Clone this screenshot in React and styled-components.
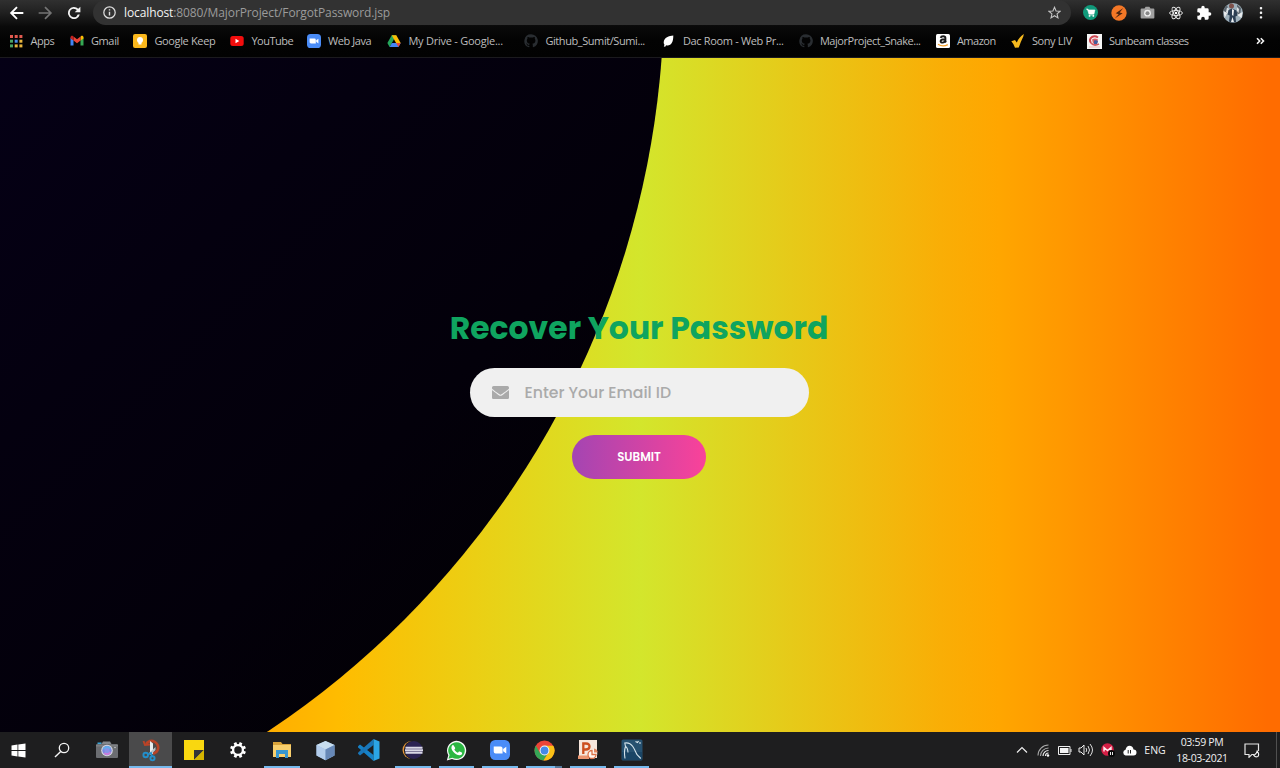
import React from "react";
import styled, { createGlobalStyle } from "styled-components";

const Global = createGlobalStyle`
  * { box-sizing: border-box; }
  html, body { margin: 0; padding: 0; }
  body { width: 1280px; height: 768px; overflow: hidden; background: #000; font-family: "Open Sans", "Noto Sans", sans-serif; }
  svg { display: block; flex: none; }
`;

const Screen = styled.div`
  width: 1280px;
  height: 768px;
  display: flex;
  flex-direction: column;
  overflow: hidden;
`;

/* ---------- browser chrome ---------- */
const Chrome = styled.header`
  height: 58px;
  flex: none;
  border-bottom: 1px solid #1b1a1e;
  background: linear-gradient(#303030 0, #212121 12px, #090909 27px, #030303 40px, #020202 100%);
`;
const Toolbar = styled.div`
  height: 25px;
  display: flex;
  align-items: center;
`;
const NavButtons = styled.div`
  width: 93px;
  padding-left: 9px;
  display: flex;
  align-items: center;
  gap: 12px;
`;
const AddressBar = styled.div`
  width: 978px;
  height: 25px;
  padding: 0 10px 0 10px;
  border-radius: 12.5px;
  background: #323232;
  display: flex;
  align-items: center;
`;
const Url = styled.div`
  flex: 1;
  margin-left: 8px;
  font-size: 12px;
  line-height: 16px;
  letter-spacing: -0.11px;
  color: #9b9b9b;
  white-space: nowrap;
`;
const Host = styled.span`
  color: #f4f4f4;
`;
const Extensions = styled.div`
  flex: 1;
  padding-left: 10px;
  display: flex;
  align-items: center;
`;
const ExtensionSlot = styled.div`
  width: ${(p) => p.$width}px;
  display: flex;
  align-items: center;
  justify-content: center;
`;
const Bookmarks = styled.nav`
  height: 32px;
  padding-left: 9px;
  display: flex;
  align-items: center;
`;
const Bookmark = styled.div`
  width: ${(p) => p.$width}px;
  display: flex;
  align-items: center;
  gap: 7.4px;
`;
const BookmarkLabel = styled.span`
  font-size: 11px;
  line-height: 16px;
  letter-spacing: ${(p) => p.$spacing}px;
  color: #bdbdbd;
  white-space: nowrap;
`;
const More = styled.div`
  margin-left: auto;
  padding-right: 15px;
`;

/* ---------- page ---------- */
const Page = styled.main`
  position: relative;
  height: 674px;
  flex: none;
  overflow: hidden;
  background: linear-gradient(90deg, #ff6a00 0%, #ffac00 20%, #ffbc00 26.5%, #d3e62c 50%, #f9ae06 73.5%, #ffa600 78%, #ff6c00 99%);
`;
const Circle = styled.div`
  position: absolute;
  left: -1108px;
  top: -951.4px;
  width: 1772.4px;
  height: 1772.4px;
  border-radius: 50%;
  background: linear-gradient(-45deg, #020104 10%, #03000a 20%, #04000f 31%, #050016 42%);
`;
const Form = styled.form`
  position: relative;
  width: 400px;
  margin-left: 439px;
  padding-top: 245px;
  display: flex;
  flex-direction: column;
  align-items: center;
  font-family: Poppins, Inter, sans-serif;
`;
const Title = styled.h1`
  margin: 0;
  font-size: 31.45px;
  line-height: 50px;
  font-weight: 700;
  color: #0fa45f;
  white-space: nowrap;
`;
const Field = styled.div`
  width: 339px;
  height: 49px;
  margin-top: 15px;
  padding-left: 22px;
  border-radius: 25px;
  background: #f0f0f0;
  display: flex;
  align-items: center;
  gap: 16px;
`;
const Placeholder = styled.span`
  font-size: 15.7px;
  font-weight: 500;
  line-height: 24px;
  color: #aaa;
  white-space: nowrap;
`;
const Submit = styled.div`
  width: 134px;
  height: 44px;
  margin-top: 18px;
  border-radius: 22px;
  background: linear-gradient(90deg, #a445b2, #fa4299);
  display: flex;
  align-items: center;
  justify-content: center;
  font-size: 11.8px;
  font-weight: 600;
  color: #fff;
`;

/* ---------- taskbar ---------- */
const Taskbar = styled.footer`
  height: 36px;
  flex: none;
  display: flex;
  background: #1e1e1f;
`;
const Task = styled.div`
  width: ${(p) => p.$width || 43.73}px;
  height: 36px;
  padding-right: ${(p) => p.$shift || 0}px;
  position: relative;
  display: flex;
  align-items: center;
  justify-content: center;
  background: ${(p) => (p.$active ? "#4a4a4b" : "transparent")};
`;
const Running = styled.i`
  position: absolute;
  bottom: 0;
  left: ${(p) => (p.$wide ? 0 : 4)}px;
  right: ${(p) => (p.$wide ? 0 : 4)}px;
  height: 2px;
  border-right: ${(p) => (p.$grouped ? "7px solid #55789a" : "none")};
  background: #76b9ed;
`;
const Tray = styled.div`
  margin-left: auto;
  display: flex;
  align-items: center;
`;
const TrayItem = styled.div`
  width: ${(p) => p.$width || 21.5}px;
  display: flex;
  align-items: center;
  justify-content: center;
`;
const TrayText = styled.div`
  width: ${(p) => p.$width}px;
  text-align: center;
  font-size: 10.5px;
  line-height: 16px;
  letter-spacing: ${(p) => p.$spacing || 0}px;
  color: #f2f2f2;
  white-space: nowrap;
`;
const DesktopEdge = styled.div`
  height: 36px;
  width: 4px;
  margin-left: 7px;
  border-left: 1px solid #505050;
`;

/* ---------- icons ---------- */
const Icon = ({ s = 14, w, h, vb = "0 0 24 24", children, ...r }) => (
  <svg width={w || s} height={h || s} viewBox={vb} fill="none" {...r}>{children}</svg>
);
const BackIcon = () => (
  <Icon s={16}><path d="M21.5 12H3.5M12 3.2 3.2 12l8.8 8.8" stroke="#fff" strokeWidth="2.8" /></Icon>
);
const ForwardIcon = () => (
  <Icon s={16}><path d="M2.5 12h18M12 3.2l8.8 8.8-8.8 8.8" stroke="#747474" strokeWidth="2.6" /></Icon>
);
const ReloadIcon = () => (
  <Icon s={18}>
    <path d="M17.65 6.35A8 8 0 1 0 19.73 14h-2.7A5.5 5.5 0 1 1 12 6.5c1.5 0 2.900.6 3.900 1.600L13 11h7.500V3.500z" fill="#f2f2f2" />
  </Icon>
);
const InfoIcon = () => (
  <Icon s={13}><circle cx="12" cy="12" r="10.5" stroke="#dedede" strokeWidth="2.3" /><path d="M12 10.5v7M12 6v2.5" stroke="#dedede" strokeWidth="2.6" /></Icon>
);
const StarIcon = () => (
  <Icon s={13}><path d="m12 2.3 2.9 6.8 7.4.6-5.6 4.9 1.7 7.3L12 18l-6.4 3.9 1.7-7.3-5.6-4.9 7.4-.6z" stroke="#c4c4c4" strokeWidth="2" /></Icon>
);
const CartIcon = () => (
  <Icon s={15}><circle cx="12" cy="12" r="12" fill="#10997a" /><path d="M5 6.500h3l.5 1.500H19l-1.500 6.500H9.500L7.500 8" fill="#fff" stroke="#fff" strokeWidth="1" /><path d="M9 16h9" stroke="#fff" strokeWidth="1" /><circle cx="10.5" cy="17.5" r="1.400" fill="#fff" /><circle cx="16.5" cy="17.5" r="1.400" fill="#fff" /></Icon>
);
const BoltIcon = () => (
  <Icon s={16}><circle cx="12" cy="12" r="11.5" fill="#f37726" /><path d="M18.500 4.500 7 12.500l4.500 1.200-6 6.500L17.500 12.500l-4.500-1.200z" fill="#4c2512" /></Icon>
);
const CameraIcon = () => (
  <Icon s={15}><path d="M2.500 5.500h4.700L9 2.800h6l1.800 2.700h4.700a1.500 1.500 0 0 1 1.500 1.500v13a1.500 1.500 0 0 1-1.500 1.500h-19A1.500 1.500 0 0 1 1 20V7a1.500 1.500 0 0 1 1.500-1.500z" fill="#a0a0a0" /><circle cx="12" cy="13" r="5.500" fill="#ececec" /><circle cx="12" cy="13" r="3.200" fill="#878787" /></Icon>
);
const AtomIcon = () => (
  <Icon s={14}><g stroke="#e9e9e9" strokeWidth="1.6"><ellipse cx="12" cy="12" rx="11" ry="4.3" /><ellipse cx="12" cy="12" rx="11" ry="4.3" transform="rotate(60 12 12)" /><ellipse cx="12" cy="12" rx="11" ry="4.3" transform="rotate(120 12 12)" /></g><circle cx="12" cy="12" r="2.2" fill="#fff" /></Icon>
);
const PuzzleIcon = () => (
  <Icon s={16}><path d="M20.5 11H19V7a2 2 0 0 0-2-2h-4V3.5a2.5 2.5 0 0 0-5 0V5H4a2 2 0 0 0-2 2v3.8h1.5a2.7 2.7 0 0 1 0 5.4H2V20a2 2 0 0 0 2 2h3.8v-1.5a2.7 2.7 0 0 1 5.4 0V22H17a2 2 0 0 0 2-2v-4h1.5a2.5 2.5 0 0 0 0-5z" fill="#fff" /></Icon>
);
const Avatar = () => (
  <Icon s={20} vb="0 0 20 20"><circle cx="10" cy="10" r="10" fill="#9eb0bb" /><path d="M4 2.200A10 10 0 0 0 1 14l3-3 1-6zM14 1.500l4 3.500-1 9-3-4z" fill="#5c666f" /><path d="m.5 8 4 2-3 5zM14 12l5.500-3-1 6z" fill="#e8ebed" /><path d="M4 4.500 6 6l-1 5-2-2zM14 4l2 2-.5 4-1.500-2z" fill="#dce1e5" /><circle cx="8.500" cy="3" r="2.500" fill="#7e514b" /><path d="M5.500 7 9 5.500l4.500 2 1 5-2 1 .5 5.500q-4 1.200-7-.5l.7-6-2.200-1z" fill="#2b3e53" /><path d="m9 6 2 1-.7 6-1.300-1zM9.500 14l1.500 5H8z" fill="#edf0f2" /></Icon>
);
const DotsIcon = () => (
  <Icon w={4} h={14} vb="0 0 4 14"><g fill="#f4f4f4"><rect x=".8" y="1" width="2.4" height="2.4" rx=".8" /><rect x=".8" y="5.6" width="2.4" height="2.4" rx=".8" /><rect x=".8" y="10.2" width="2.4" height="2.4" rx=".8" /></g></Icon>
);
const AppsIcon = () => {
  const colors = ["#e15a50", "#e15a50", "#e15a50", "#4ca466", "#4b8ee8", "#e8b63f", "#4ca466", "#e8b63f", "#e8b63f"];
  return <Icon vb="0 0 14 14">{colors.map((c, i) => <rect key={i} x={1 + (i % 3) * 4.7} y={1 + Math.floor(i / 3) * 4.7} width="3" height="3" fill={c} />)}</Icon>;
};
const GmailIcon = () => (
  <Icon vb="0 0 14 14"><path d="M.5 3.500v8h3V6z" fill="#4285f4" /><path d="M10.500 6v5.500h3v-8z" fill="#34a853" /><path d="M10.500 3v3.600l3-2.200V3.400c0-1.500-1.600-2-2.600-1.200z" fill="#fbbc04" /><path d="M3.500 6.600V2.600L7 5.200l3.500-2.600v4L7 9.200z" fill="#ea4335" /><path d="M.5 3.400v1l3 2.200V2.500l-.4-.3C2.100 1.400.5 1.900.5 3.400z" fill="#c5221f" /></Icon>
);
const KeepIcon = () => (
  <Icon vb="0 0 14 14"><rect width="14" height="14" rx="2" fill="#fbb81c" /><circle cx="7" cy="6" r="3" fill="#fff" /><path d="M5.500 8h3v2.500h-3z" fill="#fff" /></Icon>
);
const YoutubeIcon = () => (
  <Icon vb="0 0 14 14"><rect x=".3" y="2" width="13.400" height="10" rx="2.500" fill="#f20d0d" /><path d="m5.500 4.800 3.800 2.200-3.800 2.200z" fill="#fff" /></Icon>
);
const ZoomIcon = ({ s = 14 }) => (
  <Icon s={s} vb="0 0 14 14"><rect width="14" height="14" rx="3.600" fill="#4a8cf7" /><path d="M2.600 4.600h4.800A1.400 1.400 0 0 1 8.800 6v3.500H4A1.400 1.400 0 0 1 2.600 8.100zM9.200 6.300l2.200-1.600v4.700L9.200 7.800z" fill="#fff" /></Icon>
);
const DriveIcon = () => (
  <Icon vb="0 0 14 14"><path d="M4.700 1.300h4.600L7 5.300 2.600 13 .4 9z" fill="#24a65a" /><path d="M4.700 1.300h4.600L13.700 9H9.100z" fill="#fbbc05" /><path d="M4.900 9h8.800l-2.300 4H2.600z" fill="#4285f4" /><path d="M13.700 9 11.400 13 9.100 9z" fill="#e64a3b" /></Icon>
);
const GithubIcon = () => (
  <Icon><path d="M12 .5a11.500 11.500 0 0 0-3.600 22.400c.6.1.8-.2.8-.6v-2.200c-3.200.7-3.900-1.400-3.900-1.400-.5-1.300-1.300-1.700-1.300-1.700-1-.7.1-.7.1-.7 1.200.1 1.800 1.200 1.800 1.200 1 1.800 2.700 1.300 3.400 1 .1-.8.400-1.300.7-1.600-2.500-.3-5.200-1.300-5.200-5.700 0-1.300.4-2.300 1.200-3.100-.1-.3-.5-1.500.1-3.100 0 0 1-.3 3.200 1.200a11 11 0 0 1 5.800 0c2.200-1.500 3.200-1.200 3.200-1.200.6 1.600.2 2.800.1 3.100.7.8 1.200 1.800 1.200 3.100 0 4.400-2.700 5.400-5.300 5.700.4.400.8 1.100.8 2.200v3.200c0 .4.200.7.8.6A11.500 11.500 0 0 0 12 .5z" fill="#292d31" /></Icon>
);
const LeafIcon = () => (
  <Icon vb="0 0 14 14"><path d="M11.300 1.500C7 1.700 2 3.500 1.700 8.200c0 1.200.3 1.900.8 2.500L1.800 12.500l1.400.2.900-1.400c4.700 1.200 7.300-2.800 7.200-9.800z" fill="#fff" /></Icon>
);
const AmazonIcon = () => (
  <Icon vb="0 0 14 14"><rect width="14" height="14" rx="1.500" fill="#fff" /><path d="M4.700 3.900q.3-1.600 2.400-1.600 2.300 0 2.300 1.800V7q0 .7.700 1.400M8.700 5.200c-2.500 0-4.100.5-4.100 2 0 2.100 4.100 1.900 4.100-.5" stroke="#191919" strokeWidth="1.900" /><path d="M2 10.200q4.800 3.100 9.800.4" stroke="#f6a12b" strokeWidth="1.300" /></Icon>
);
const SonyIcon = () => (
  <Icon vb="0 0 14 14"><path d="M.3 7.200 4 6l1.800 2.500Q8 3 12.800 0l-.5 2.500Q9.800 7.500 7.800 13.500l-3.800.3Q2.600 9.500.3 7.200z" fill="#f6b91e" /></Icon>
);
const SunbeamIcon = () => (
  <Icon s={15} vb="0 0 15 15"><path fill="#f5f5f5" d="M0 0h15v15H0z" /><path d="M11 3.500Q8 1.500 5 3 1.500 5.500 4 9" stroke="#cf4651" strokeWidth="2" /><path d="M5 5.500q3-2 6 0l-1 4H6z" fill="#d4606c" /><path d="M7 6.500q3-1 4 1l-1 2.500H7z" fill="#425c9d" /><path d="M4 9q3 3.500 8 1" stroke="#d35a63" strokeWidth="1.800" /><path d="M2 13h11" stroke="#e4b7bb" strokeWidth="1" /></Icon>
);
const MoreIcon = () => <Icon w={9} h={8} vb="0 0 9 8"><path d="m1 1.200 2.700 2.800L1 6.800M4.800 1.200 7.500 4 4.800 6.800" stroke="#f4f4f4" strokeWidth="1.600" /></Icon>;
const MailIcon = () => (
  <Icon w={17} h={13} vb="0 0 512 384" preserveAspectRatio="none"><path d="M502.300 126.800c3.900-3.100 9.700-.2 9.700 4.700V336c0 26.500-21.500 48-48 48H48c-26.500 0-48-21.500-48-48V131.600c0-5 5.700-7.800 9.700-4.700 22.400 17.400 52.100 39.500 154.100 113.600 21.100 15.400 56.700 47.800 92.200 47.600 35.700.3 72-32.800 92.300-47.600 102-74.100 131.600-96.300 154-113.700zM256 256c23.200.4 56.600-29.200 73.400-41.400 132.700-96.300 142.800-104.700 173.400-128.700 5.800-4.500 9.200-11.500 9.200-18.900V48c0-26.500-21.500-48-48-48H48C21.500 0 0 21.500 0 48v19c0 7.400 3.400 14.300 9.200 18.900 30.600 23.900 40.700 32.400 173.400 128.700 16.800 12.200 50.200 41.800 73.400 41.400z" fill="#aaa" /></Icon>
);

const WindowsIcon = () => <Icon s={15} vb="0 0 15 15"><path d="M.5 2.500 6.500 1.600v5.500h-6zM7.300 1.500l7.200-1v6.600H7.300zM.5 7.900h6v5.500l-6-.9zM7.300 7.900h7.200v6.600l-7.200-1z" fill="#fff" /></Icon>;
const SearchIcon = () => <Icon s={16} vb="0 0 16 16"><circle cx="10" cy="6" r="4.700" stroke="#f5f5f5" strokeWidth="1.300" /><path d="M6.700 9.500 1 15" stroke="#f5f5f5" strokeWidth="1.400" /></Icon>;
const PhotoIcon = () => <Icon w={22} h={18} vb="0 0 22 18"><path d="M1.500 1.500h4V4h-4z" fill="#39a5d9" /><path d="M7 .5h7L15.500 3H5.500z" fill="#85898e" /><rect y="3" width="22" height="14" rx="1" fill="#6b6d71" /><path d="M0 4h22v1.500H0z" fill="#7e8083" /><circle cx="11" cy="9.500" r="5.800" fill="#d9dce2" /><circle cx="11" cy="9.500" r="4.700" fill="#7a87e2" /><path d="M6.600 8a4.600 4.600 0 0 1 8.400-.7L11 9.500z" fill="#62aeea" /><path d="M7.500 12.600a4.600 4.600 0 0 0 7.700-1.200L11 9.500z" fill="#c67ddb" /><circle cx="11" cy="9.500" r="2.600" fill="#8a93e9" /><circle cx="19" cy="6.500" r=".7" fill="#ddd" /></Icon>;
const SnipIcon = () => <Icon w={20} h={23} vb="0 0 20 23"><path d="M5 5Q9 0 14 3c5 3.500 4 10-2 11.700" stroke="#b94327" strokeWidth="2.500" /><path d="m2.500 2 1.500 4 5-.5" stroke="#b94327" strokeWidth="2" /><path d="m9 2 3 2.500V15l-3-1z" fill="#e9edef" /><path d="m14.500 8-6.500 6 1.500 2 5-5z" fill="#bac2c7" /><circle cx="4.700" cy="16" r="2.300" stroke="#238fca" strokeWidth="1.900" /><circle cx="11.500" cy="19.300" r="2.100" stroke="#238fca" strokeWidth="1.900" /><path d="m7 15.500 3-1.500 1 3" stroke="#238fca" strokeWidth="1.800" /></Icon>;
const NotesIcon = () => <Icon s={20} vb="0 0 20 20"><path d="M0 0h20v20H0z" fill="#f9d710" /><path d="M10 10h10L10 20z" fill="#343438" /><path d="M20 10v10H10z" fill="#d6b500" /></Icon>;
const GearIcon = () => <Icon s={18} vb="0 0 18 18"><circle cx="9" cy="9" r="4.900" stroke="#fff" strokeWidth="2.300" />{[0, 45, 90, 135, 180, 225, 270, 315].map((a) => <path key={a} d="M7.600 1h2.800v3H7.600z" fill="#fff" transform={`rotate(${a + 22.5} 9 9)`} />)}</Icon>;
const FolderIcon = () => <Icon w={20} h={18} vb="0 0 20 18"><path d="M1 1h8l1.500 2H19v13H1z" fill="#d9a33a" /><path d="M1 4h18v12H1z" fill="#f8cf6d" /><path d="M4 9h12v8h-3v-4H7v4H4z" fill="#3797d1" /></Icon>;
const CubeIcon = () => <Icon w={19} h={21} vb="0 0 19 21"><path d="m9.500 1 9 4v10.500l-9 4.800-9-4.800V5z" fill="#9abce0" /><path d="m9.500 1 9 4-9 4.500L.5 5z" fill="#c8deef" /><path d="M.5 5 9.500 9.500v10.800l-9-4.800z" fill="#b3cdec" /><path d="m18.500 5-9 4.500v10.800l9-4.800z" fill="#6788b7" /></Icon>;
const CodeIcon = () => <Icon w={22} h={22} vb="0 0 22 22"><path d="M0 7.200 2 5.600l13.500 10.300V22L.2 8.400z" fill="#1681c7" /><path d="M0 14.800 2 16.400 15.500 6V0L.2 13.600z" fill="#1976b9" /><path d="m15.500 0 6 2.500v17L15.500 22z" fill="#2ba5e6" /></Icon>;
const EclipseIcon = () => <Icon w={21} h={20} vb="0 0 21 20"><circle cx="9.500" cy="10" r="9" fill="#e8983a" /><circle cx="11" cy="10" r="9.200" fill="#1e1e1f" /><circle cx="11.800" cy="10" r="9" fill="#2b2352" /><path d="M3.500 7.800h17M3 10.300h18M3.500 12.800h17" stroke="#d9d8e5" strokeWidth="1.900" /></Icon>;
const WhatsappIcon = () => <Icon s={21} vb="0 0 21 21"><path d="m.8 20.400 1.500-5.100A9.600 9.600 0 1 1 6 18.900z" fill="#f7faf8" /><path d="m2.500 18.800 1.100-3.700a8.300 8.300 0 1 1 2.800 2.600z" fill="#2bb742" /><path d="M7.500 5.200c-.4-.2-.9-.2-1.300.3-3 3.400 3 10 7.800 9.700 1-.1 2-.8 2.100-1.700.1-.5 0-.9-.3-1l-2.100-1c-.4-.2-.7 0-1 .3l-.7.9c-.3.200-2.100-.7-3.700-3l.8-1.100c.2-.3.1-.5 0-.8z" fill="#fff" /></Icon>;
const ChromeIcon = () => <Icon s={21} vb="0 0 21 21"><circle cx="10.500" cy="10.500" r="10" fill="#eb4437" /><path d="M1.800 5.600A10 10 0 0 0 9.500 20.500l4.600-7.600H6z" fill="#36a756" /><path d="M10.500 5.700h8.800a10 10 0 0 1-9.800 14.800l4.800-7.700z" fill="#fbc116" /><circle cx="10.500" cy="10.500" r="4.900" fill="#f5f5f5" /><circle cx="10.500" cy="10.500" r="3.900" fill="#4589e8" /></Icon>;
const PowerpointIcon = () => <Icon s={20} vb="0 0 20 20"><path d="M1 0h18v18H1z" fill="#f6e6dc" /><path d="M0 15.500h11V19H0z" fill="#eb9570" /><path d="M5.300 14V3.500H8q3.700 0 3.500 3.100Q11.300 9.500 8 9.500H6" stroke="#cc4e1e" strokeWidth="2.300" /><circle cx="14.500" cy="14" r="4.800" fill="#fff8f3" /><path d="M14 10.500V14.500h4a4 4 0 1 1-4-4z" stroke="#dc7146" strokeWidth="1.300" /><path d="M16 8.500q3.500.5 3.800 4H16z" fill="#e18761" /></Icon>;
const MysqlIcon = () => <Icon s={22} vb="0 0 22 22"><rect x=".5" y=".5" width="21" height="21" rx="1.500" fill="#265170" /><path d="M1 13h20v8H1z" fill="#1a4565" /><path d="M4 19.500Q2.800 12 4.500 7.500L3.800 4q5-.8 8 3.500c2.500 3.800 3.200 6.700 4.500 8.500l3.500 3.500M4.500 7.500q2.200 1 2.500 6" stroke="#d4e3eb" strokeWidth="1.100" /><path d="m14.500 2.500 2 1 1-1.500M18 4h2" stroke="#d9e7ed" strokeWidth="1.200" /></Icon>;

const ChevronUp = () => <Icon w={12} h={8} vb="0 0 12 8"><path d="m1 6.500 5-5 5 5" stroke="#eee" strokeWidth="1.200" /></Icon>;
const WifiIcon = () => <Icon s={13} vb="0 0 13 13"><g stroke="#a8a8a8" strokeWidth="1.100"><path d="M1 11.500A10.500 10.500 0 0 1 11.500 1M3.500 12a8 8 0 0 1 8-8" /></g><path d="M6 12a5.500 5.500 0 0 1 5.500-5.500M8.500 12a3 3 0 0 1 3-3" stroke="#ededed" strokeWidth="1.200" /><circle cx="11" cy="11.500" r="1.200" fill="#fff" /></Icon>;
const BatteryIcon = () => <Icon w={14} h={9} vb="0 0 14 9"><path d="M.5.5h11.500v8H.5zM13 3v3" stroke="#eee" /><path d="M2 2h8.500v5H2z" fill="#f5f5f5" /></Icon>;
const SoundIcon = () => <Icon w={16} h={14} vb="0 0 16 14"><path d="M1 5h2l3-3v10L3 9H1z" stroke="#eee" /><path d="M8 5q1.500 2 0 4M10 3q3 4 0 8M12 1q5 6 0 12" stroke="#ddd" /></Icon>;
const AntivirusIcon = () => <Icon s={14} vb="0 0 14 14"><circle cx="6.500" cy="6.500" r="6.300" fill="#d51f45" /><path d="M3 8.500v-4l3.500 3 3.500-3v3" stroke="#ffe9ed" strokeWidth="1.400" /><circle cx="10.500" cy="10.500" r="3.500" fill="#080808" /><path d="M9.500 9v3M11.500 9v3" stroke="#fff" strokeWidth=".9" /></Icon>;
const CloudIcon = () => <Icon w={15} h={11} vb="0 0 15 11"><path d="M3.500 10.500a3 3 0 0 1 0-5.800Q4.500.8 7.500.8q3.300 0 4 3.700a3 3 0 0 1 0 6z" fill="#fff" /><path d="M6.200 5v3.500M8.500 5v3.500" stroke="#242424" /></Icon>;
const NoticeIcon = () => <Icon w={16} h={15} vb="0 0 16 15"><path d="M14.500 8V1H1v10.500h4v2.800l2.800-2.800H10" stroke="#e5e5e5" strokeWidth="1.200" /><path d="M13.200 8q-.6 3-3.400 4.500 1.500 2 4 1 2-2-.6-5.500z" stroke="#f5f5f5" strokeWidth="1.100" /></Icon>;

const bookmarks = [
  ["Apps", AppsIcon, 60.5, -0.4],
  ["Gmail", GmailIcon, 63.5, -0.35],
  ["Google Keep", KeepIcon, 97, -0.35],
  ["YouTube", YoutubeIcon, 76.5, -0.5],
  ["Web Java", ZoomIcon, 80.5, -0.4],
  ["My Drive - Google...", DriveIcon, 137, -0.24],
  ["Github_Sumit/Sumi...", GithubIcon, 137.5, -0.42],
  ["Dac Room - Web Pr...", LeafIcon, 137, -0.33],
  ["MajorProject_Snake...", GithubIcon, 137, -0.45],
  ["Amazon", AmazonIcon, 75, -0.5],
  ["Sony LIV", SonyIcon, 76, -0.4],
  ["Sunbeam classes", SunbeamIcon, 110, -0.53],
];

const tasks = [
  { Glyph: PhotoIcon },
  { Glyph: SnipIcon, running: true, active: true },
  { Glyph: NotesIcon },
  { Glyph: GearIcon },
  { Glyph: FolderIcon, running: true },
  { Glyph: CubeIcon },
  { Glyph: CodeIcon },
  { Glyph: EclipseIcon, running: true },
  { Glyph: WhatsappIcon, running: true },
  { Glyph: () => <ZoomIcon s={20} />, running: true },
  { Glyph: ChromeIcon, running: true, grouped: true },
  { Glyph: PowerpointIcon, running: true },
  { Glyph: MysqlIcon, running: true },
];

export default function App() {
  return (
    <Screen>
      <Global />
      <Chrome>
        <Toolbar>
          <NavButtons><BackIcon /><ForwardIcon /><ReloadIcon /></NavButtons>
          <AddressBar>
            <InfoIcon />
            <Url><Host>localhost</Host>:8080/MajorProject/ForgotPassword.jsp</Url>
            <StarIcon />
          </AddressBar>
          <Extensions>
            <ExtensionSlot $width={18}><CartIcon /></ExtensionSlot>
            <ExtensionSlot $width={39}><BoltIcon /></ExtensionSlot>
            <ExtensionSlot $width={18}><CameraIcon /></ExtensionSlot>
            <ExtensionSlot $width={39}><AtomIcon /></ExtensionSlot>
            <ExtensionSlot $width={18}><PuzzleIcon /></ExtensionSlot>
            <ExtensionSlot $width={39}><Avatar /></ExtensionSlot>
            <ExtensionSlot $width={18}><DotsIcon /></ExtensionSlot>
          </Extensions>
        </Toolbar>
        <Bookmarks>
          {bookmarks.map(([label, Glyph, width, spacing]) => (
            <Bookmark key={label} $width={width}><Glyph /><BookmarkLabel $spacing={spacing}>{label}</BookmarkLabel></Bookmark>
          ))}
          <More><MoreIcon /></More>
        </Bookmarks>
      </Chrome>
      <Page>
        <Circle />
        <Form>
          <Title>Recover Your Password</Title>
          <Field><MailIcon /><Placeholder>Enter Your Email ID</Placeholder></Field>
          <Submit>SUBMIT</Submit>
        </Form>
      </Page>
      <Taskbar>
        <Task $width={41.3} $shift={4.3}><WindowsIcon /></Task>
        <Task $shift={2}><SearchIcon /></Task>
        {tasks.map(({ Glyph, running, active, grouped }, i) => (
          <Task key={i} $active={active}><Glyph />{running && <Running $wide={active} $grouped={grouped} />}</Task>
        ))}
        <Tray>
          <TrayItem><ChevronUp /></TrayItem>
          <TrayItem><WifiIcon /></TrayItem>
          <TrayItem><BatteryIcon /></TrayItem>
          <TrayItem><SoundIcon /></TrayItem>
          <TrayItem><AntivirusIcon /></TrayItem>
          <TrayItem><CloudIcon /></TrayItem>
          <TrayText $width={30}>ENG</TrayText>
          <TrayText $width={64} $spacing={-0.33}>03:59 PM<br />18-03-2021</TrayText>
          <TrayItem $width={35}><NoticeIcon /></TrayItem>
          <DesktopEdge />
        </Tray>
      </Taskbar>
    </Screen>
  );
}
